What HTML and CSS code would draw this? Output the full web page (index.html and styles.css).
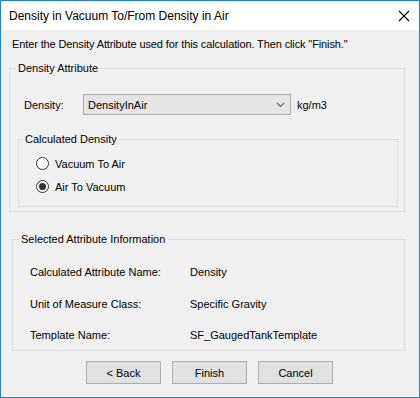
FILE: index.html
```html
<!DOCTYPE html>
<html>
<head>
<meta charset="utf-8">
<link rel="stylesheet" href="styles.css">
</head>
<body>
<div class="window">
  <div class="titlebar">
    <span class="title">Density in Vacuum To/From Density in Air</span>
    <svg class="close" width="12" height="12" viewBox="0 0 12 12"><path d="M1 1 L11 11 M11 1 L1 11" stroke="#000" stroke-width="1.1" fill="none"/></svg>
  </div>
  <div class="content">
    <div class="intro">Enter the Density Attribute used for this calculation. Then click "Finish."</div>
    <fieldset class="group group-density">
      <legend class="legend">Density Attribute</legend>
      <div class="density-row">
        <span class="density-label">Density:</span>
        <div class="combo">
          <span class="combo-text">DensityInAir</span>
          <svg class="combo-arrow" width="9" height="6" viewBox="0 0 9 6"><path d="M1 1 L4.5 4.5 L8 1" stroke="#606060" stroke-width="1.1" fill="none"/></svg>
        </div>
        <span class="unit">kg/m3</span>
      </div>
      <fieldset class="group group-calc">
        <legend class="legend legend-inner">Calculated Density</legend>
        <div class="radios">
          <label class="radio-row"><span class="radio"></span><span>Vacuum To Air</span></label>
          <label class="radio-row"><span class="radio checked"></span><span>Air To Vacuum</span></label>
        </div>
      </fieldset>
    </fieldset>
    <fieldset class="group group-info">
      <legend class="legend">Selected Attribute Information</legend>
      <div class="info-grid">
        <span>Calculated Attribute Name:</span><span>Density</span>
        <span>Unit of Measure Class:</span><span>Specific Gravity</span>
        <span>Template Name:</span><span>SF_GaugedTankTemplate</span>
      </div>
    </fieldset>
    <div class="buttons">
      <button class="btn">&lt; Back</button>
      <button class="btn">Finish</button>
      <button class="btn">Cancel</button>
    </div>
  </div>
</div>
</body>
</html>
```
FILE: styles.css
```css
html, body {
  margin: 0;
  padding: 0;
  background: #f0f0f0;
}
.window {
  width: 420px;
  height: 398px;
  box-sizing: border-box;
  border: 1px solid #1883d7;
  background: #f0f0f0;
  font-family: "Liberation Sans", Arial, sans-serif;
  font-size: 11px;
  color: #000;
  display: flex;
  flex-direction: column;
}
.titlebar {
  height: 29px;
  background: #fff;
  display: flex;
  align-items: center;
  justify-content: space-between;
  padding: 0 9px 0 8px;
  flex: none;
}
.title {
  font-size: 12px;
  line-height: 16px;
}
.close {
  display: block;
}
.content {
  display: flex;
  flex-direction: column;
  align-items: flex-start;
}
.intro {
  margin: 8px 0 0 11px;
  line-height: 13px;
  letter-spacing: -0.12px;
}
.group {
  margin: 0;
  padding: 0;
  border: 1px solid #dcdcdc;
  min-width: 0;
  box-sizing: border-box;
}
.legend {
  padding: 0 2px;
  margin-left: 6px;
  line-height: 13px;
}
.legend-inner {
  margin-left: 4px;
}
.group-density {
  margin: 11px 0 0 8px;
  width: 396px;
  padding: 0 0 4px 0;
}
.density-row {
  display: flex;
  align-items: center;
  height: 21px;
  margin: 19px 0 18px 14px;
}
.density-label {
  width: 59px;
}
.combo {
  width: 208px;
  height: 21px;
  box-sizing: border-box;
  border: 1px solid #adadad;
  background: #e5e5e5;
  display: flex;
  align-items: center;
  justify-content: space-between;
  padding: 0 5px 0 4px;
}
.combo-arrow {
  display: block;
}
.unit {
  margin-left: 6px;
}
.group-calc {
  width: 380px;
  margin-left: 8px;
  padding: 0 0 11px 0;
}
.radios {
  display: flex;
  flex-direction: column;
  gap: 6px;
  margin: 9px 0 0 17px;
}
.radio-row {
  display: flex;
  align-items: center;
  height: 17px;
  gap: 6px;
}
.radio {
  width: 13px;
  height: 13px;
  box-sizing: border-box;
  border: 1px solid #333;
  border-radius: 50%;
  background: #fff;
  display: flex;
  align-items: center;
  justify-content: center;
}
.radio.checked::after {
  content: "";
  width: 7px;
  height: 7px;
  border-radius: 50%;
  background: #333;
}
.group-info {
  margin: 21px 0 0 11px;
  width: 393px;
  padding: 0 0 8px 0;
}
.info-grid {
  display: grid;
  grid-template-columns: 160px auto;
  row-gap: 18.5px;
  margin: 20px 0 0 17px;
  line-height: 13px;
}
.buttons {
  display: flex;
  gap: 11px;
  margin: 10px 0 0 85px;
}
.btn {
  width: 75px;
  height: 23px;
  box-sizing: border-box;
  border: 1px solid #adadad;
  background: #e1e1e1;
  font-family: "Liberation Sans", Arial, sans-serif;
  font-size: 11px;
  color: #000;
  padding: 0;
  margin: 0;
}
```
